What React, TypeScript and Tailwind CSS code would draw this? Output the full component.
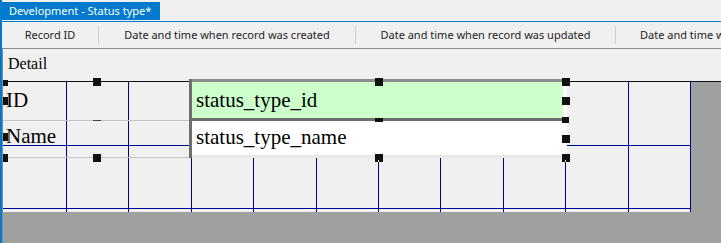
import React from "react";

const sans = { fontFamily: '"Noto Sans", "Open Sans", sans-serif' };
const serif = { fontFamily: '"Liberation Serif", "Times New Roman", serif' };

function Handle({ x, y, w = 8, h = 8 }: { x: number; y: number; w?: number; h?: number }) {
  return (
    <div
      className="absolute bg-[#111111]"
      style={{ left: x, top: y, width: w, height: h }}
    />
  );
}

export default function App() {
  const vx = [63, 125, 188, 250, 313, 375, 437, 500, 562, 625, 687];
  const hy = [63, 126];
  return (
    <div className="w-[721px] h-[243px] overflow-hidden bg-[#f0f0f0] border-l-2 border-[#007acc] flex flex-col">
      {/* tab strip */}
      <div className="h-[20px] pt-[2px] flex shrink-0">
        <div
          className="h-[18px] w-[158px] bg-[#007acc] text-white text-[11px] leading-[18px] pl-[7px] whitespace-nowrap"
          style={sans}
        >
          Development - Status type*
        </div>
      </div>
      <div className="h-px bg-[#f0f0f0] shrink-0" />
      <div className="h-px bg-[#007acc] shrink-0" />
      {/* header */}
      <div className="h-[26px] shrink-0 flex items-center text-[11px] text-[#1e1e1e] whitespace-nowrap overflow-hidden" style={sans}>
        <div className="w-[96px] shrink-0 text-center">Record ID</div>
        <div className="w-px h-[18px] shrink-0 bg-[#cfcfcf]" />
        <div className="w-[256px] shrink-0 text-center">Date and time when record was created</div>
        <div className="w-px h-[18px] shrink-0 bg-[#cfcfcf]" />
        <div className="w-[259px] shrink-0 text-center">Date and time when record was updated</div>
        <div className="w-px h-[18px] shrink-0 bg-[#cfcfcf]" />
        <div className="pl-[24px] shrink-0">Date and time when record was deleted</div>
      </div>
      <div className="h-px bg-[#8c8c8c] shrink-0" />
      {/* detail panel */}
      <div className="flex-1 flex flex-col border-l border-[#8c8c8c]">
        <div className="h-[32px] shrink-0 pl-[5px] pt-[5px] text-[16px] leading-[20px] text-black" style={serif}>
          Detail
        </div>
        <div className="h-px shrink-0 bg-[#111111]" />
        <div className="h-[130px] shrink-0 flex">
          <div className="relative w-[688px] h-[130px] shrink-0 bg-[#f0f0f0]">
            <svg className="absolute left-0 top-0" width="688" height="130">
              {vx.map((x) => (
                <line key={"v" + x} x1={x + 0.5} y1={0} x2={x + 0.5} y2={130} stroke="#000099" strokeWidth={1} />
              ))}
              {hy.map((y) => (
                <line key={"h" + y} x1={0} y1={y + 0.5} x2={688} y2={y + 0.5} stroke="#000099" strokeWidth={1} />
              ))}
            </svg>
            {/* labels */}
            <div className="absolute left-0 top-0 w-[187px] h-[39px] border-b border-[#c4c4c4] pl-[3px] pt-[6px] text-[21px] leading-[24px] text-black" style={serif}>
              ID
            </div>
            <div className="absolute left-0 top-[39px] w-[187px] h-[37px] border-b border-[#c4c4c4] pl-[3px] pt-[3px] text-[21px] leading-[24px] text-black" style={serif}>
              Name
            </div>
            {/* textboxes */}
            <div className="absolute left-[186px] top-[-3px] w-[374px] h-[79px] border-l-[3px] border-[#6e6e6e] flex flex-col">
              <div className="h-[42px] shrink-0 bg-[#ccffcc] border-t-[3px] border-b-[3px] border-t-[#8a8a8a] border-b-[#6e6e6e] pl-[4px] pt-[6px] text-[21px] leading-[24px] text-black" style={serif}>
                status_type_id
              </div>
              <div className="h-[37px] shrink-0 bg-white border-b-[3px] border-[#e8e8e8] pl-[4px] pt-[4px] text-[21px] leading-[24px] text-black" style={serif}>
                status_type_name
              </div>
            </div>
            <div className="absolute left-[560px] top-0 w-[4px] h-[76px] bg-white" />
            {/* handles */}
            <Handle x={559} y={-4} />
            <Handle x={372} y={-4} />
            <Handle x={90} y={-4} />
            <Handle x={0} y={-2} w={5} h={6} />
            <Handle x={0} y={15} w={5} h={8} />
            <Handle x={559} y={15} />
            <Handle x={372} y={36} h={4} />
            <Handle x={559} y={35} w={7} h={6} />
            <div className="absolute left-[90px] top-[38px] w-[8px] h-[1px] bg-[#444444]" />
            <Handle x={0} y={51} w={5} h={8} />
            <Handle x={559} y={53} />
            <Handle x={0} y={72} w={5} h={8} />
            <Handle x={90} y={72} />
            <Handle x={372} y={72} />
            <Handle x={559} y={72} />
            <div className="absolute left-[375px] top-[78px] w-px h-[2px] bg-[#ffff66]" />
            <div className="absolute left-[562px] top-[78px] w-px h-[2px] bg-[#ffff66]" />
          </div>
          <div className="flex-1 bg-[#a0a0a0]" />
        </div>
        <div className="flex-1 bg-[#a0a0a0]" />
      </div>
    </div>
  );
}
